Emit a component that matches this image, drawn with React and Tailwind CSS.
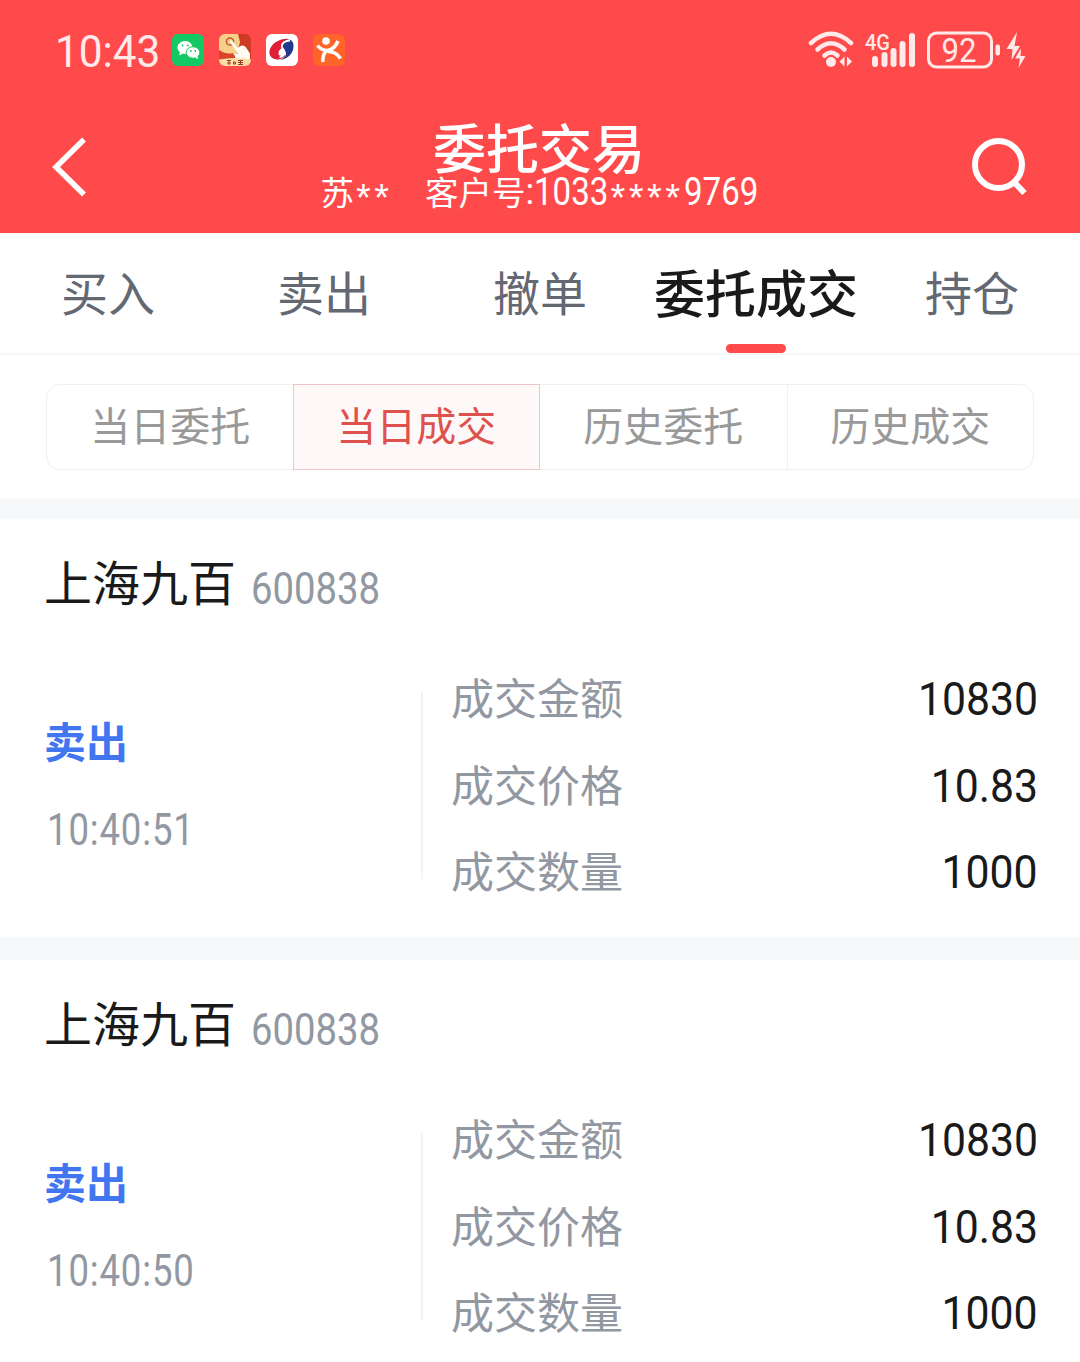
import clsx from 'clsx';

const TABS = ['买入', '卖出', '撤单', '委托成交', '持仓'];
const FILTERS = ['当日委托', '当日成交', '历史委托', '历史成交'];

const TRADES = [
  { name: '上海九百', code: '600838', side: '卖出', time: '10:40:51', amount: '10830', price: '10.83', qty: '1000' },
  { name: '上海九百', code: '600838', side: '卖出', time: '10:40:50', amount: '10830', price: '10.83', qty: '1000' },
];

const WeChatIcon = () => (
  <svg width="32" height="32" viewBox="0 0 32 32">
    <rect width="32" height="32" rx="6" fill="#14c964" />
    <ellipse cx="13" cy="13.5" rx="7.6" ry="6.5" fill="#fff" />
    <path d="M8 18l-.8 3.6 4-2z" fill="#fff" />
    <ellipse cx="21" cy="18.5" rx="6.8" ry="5.8" fill="#fff" stroke="#14c964" strokeWidth="1" />
    <path d="M23 23.5l3 1.8-.5-3.3z" fill="#fff" />
    <circle cx="10.5" cy="11.5" r="1" fill="#14c964" />
    <circle cx="15.8" cy="11.5" r="1" fill="#14c964" />
    <circle cx="18.8" cy="17" r=".9" fill="#14c964" />
    <circle cx="23.3" cy="17" r=".9" fill="#14c964" />
  </svg>
);

const BrokerIcon = () => (
  <svg width="32" height="32" viewBox="0 0 32 32">
    <defs>
      <clipPath id="broker-clip">
        <rect width="32" height="32" rx="6" />
      </clipPath>
    </defs>
    <g clipPath="url(#broker-clip)">
      <rect width="32" height="32" fill="#cf3a25" />
      <path d="M0 0h19l2 8-3 12-8 2-10-5z" fill="#f6cf8b" />
      <path d="M0 16q8 5 14 3l2 7H0z" fill="#d9442b" />
      <circle cx="11" cy="7.500" r="3.6" fill="none" stroke="#c8572e" strokeWidth="1.5" />
      <path d="M10.500 7.500q1.500-2 3.500 0l4.500 6.500 4-2.500q3-.5 4.500 2l4 6v6H17l-2-5.500 4-.5z" fill="#fffaf2" />
      <path d="M0 25.500q16-3 32 0V32H0z" fill="#fbdca4" />
      <path d="M8 26.500h4M8 29h4M10 26v5M14.500 28h2v2h-2zM19 26.500h5M19 28.500h5M19 30.500h5M21.500 26v4.500" stroke="#9a3a20" strokeWidth="1" fill="none" />
    </g>
  </svg>
);

const SwirlIcon = () => (
  <svg width="32" height="32" viewBox="0 0 32 32">
    <rect width="32" height="32" rx="6" fill="#fff" />
    <path d="M23 5C15 4 5 9 3.500 17c-1 5 3 9 9 8.500 3-.3 6-2 7-4.500-3 1.500-7 1.500-7-1.500 0-5 5-5 5.500-9 .3-2 2-4.500 5-5.500z" fill="#df1f35" />
    <path d="M19 6c6-2 9 2 8.500 7-.5 7-6 12-13.500 13 5-2 7.500-6 5-9-1.500-1.500-3.500-3-2.500-5.500.8-2.500 1.500-4 2.500-5.500z" fill="#233a8c" />
    <path d="M24 6.500c-5 0-9 3-8 6.500 1 3 3.500 3.500 2.500 6.500-1 2-3 3.500-5 4" fill="none" stroke="#fff" strokeWidth="1.800" />
  </svg>
);

const RunnerIcon = () => (
  <svg width="32" height="32" viewBox="0 0 32 32">
    <rect width="32" height="32" rx="6" fill="#ff6428" />
    <circle cx="13" cy="7" r="3.800" fill="#fff" />
    <path d="M4.500 11.500q4 5 10 5 7-1 10.500-9.500M14 16q-5 5-4 12M14.500 17.500q8-.5 13 7" fill="none" stroke="#fff" strokeWidth="3.600" />
  </svg>
);

const SignalIcons = () => (
  <svg width="222" height="44" viewBox="0 0 222 44" fill="none" stroke="#ffe9e9">
    <g strokeWidth="4.500" strokeLinecap="round">
      <path d="M3 15Q23 -3.500 43 15" />
      <path d="M9.500 21.500Q23 9 36.500 21.500" />
      <path d="M16.500 27.500Q23 21.500 29.500 27.500" />
    </g>
    <g fill="#ffe9e9" stroke="none">
      <circle cx="23" cy="34" r="5" />
      <path d="M36.500 28.500v10l-5-5zM39 28.500v10l5-5z" />
      <rect x="64" y="28" width="6" height="11" rx="3" />
      <rect x="73.500" y="24" width="6" height="15" rx="3" />
      <rect x="82.500" y="20" width="6" height="19" rx="3" />
      <rect x="91.500" y="13" width="6" height="26" rx="3" />
      <rect x="101" y="5" width="6" height="34" rx="3" />
      <rect x="187.500" y="16.500" width="4.500" height="11" rx="2" />
      <path d="M209 4l-10.500 17h6l-1 11 8.500-14h-5.500zM213 20.500l-6 10h5l-1.500 9.500 7-12h-5z" />
      <text x="57" y="22" fontSize="22" fontWeight="500" fontFamily="Roboto" textLength="25" lengthAdjust="spacingAndGlyphs">4G</text>
      <text x="133.500" y="34" fontSize="34" fontFamily="Roboto" textLength="35" lengthAdjust="spacingAndGlyphs">92</text>
    </g>
    <rect x="120.500" y="5" width="63" height="34" rx="8" strokeWidth="3" />
  </svg>
);

const StatusBar = () => (
  <div className="flex h-[100px] items-center justify-between pl-[55px] pr-[50px]">
    <div className="flex items-center gap-[15px]">
      <span className="mt-[4px] w-[102px] origin-left scale-x-[0.94] whitespace-nowrap font-[Roboto] text-[45px] leading-[48px] text-[#ffe9e9]">
        10:43
      </span>
      <WeChatIcon />
      <BrokerIcon />
      <SwirlIcon />
      <RunnerIcon />
    </div>
    <SignalIcons />
  </div>
);

const Stars = ({ children, className }) => (
  <span className={clsx("pl-[2px] pt-[15px] font-['Liberation_Sans'] text-[38px] tracking-[3.500px]", className)}>
    {children}
  </span>
);

const Digits = ({ children }) => (
  <span className="w-[75px] origin-left scale-x-[0.87] whitespace-nowrap pt-[3px] font-[Roboto] text-[38px]">{children}</span>
);

const Header = () => (
  <header className="h-[233px] bg-[#ff4a4b] text-white">
    <StatusBar />
    <div className="grid h-[133px] grid-cols-[60px_1fr_60px] px-[50px]">
      <svg className="mt-[34px]" width="40" height="66" viewBox="0 0 40 66" fill="none" stroke="#fff" strokeWidth="5.500">
        <path d="M34 5.500L6 33l28 27.500" />
      </svg>
      <div className="flex flex-col items-center pt-[18px]">
        <h1 className="-ml-[2px] text-[53px] font-medium leading-[56px]">委托交易</h1>
        <div className="-ml-px -mt-[10px] flex items-center text-[33.500px] leading-[38px]">
          <span>苏</span>
          <Stars className="w-[71px]">**</Stars>
          <span>客户号</span>
          <span className="w-[8px] pt-[3px] font-[Roboto] text-[36px]">:</span>
          <Digits>1033</Digits>
          <Stars className="w-[75px]">****</Stars>
          <Digits>9769</Digits>
        </div>
      </div>
      <svg className="mt-[34px]" width="60" height="66" viewBox="0 0 60 66" fill="none" stroke="#fff" strokeWidth="6">
        <circle cx="28.500" cy="30.500" r="23.500" />
        <path d="M44 48l10.500 11" />
      </svg>
    </div>
  </header>
);

const Tabs = ({ active }) => (
  <nav className="grid h-[122px] grid-cols-5 border-b-2 border-[#f7f7f9]">
    {TABS.map((tab) => (
      <div key={tab} className="relative flex justify-center pt-[26px]">
        <span
          className={clsx(
            'whitespace-nowrap leading-[64px]',
            tab === active ? 'text-[51px] font-medium text-[#1a1a1a]' : 'text-[47px] text-[#646873]'
          )}
        >
          {tab}
        </span>
        {tab === active && <i className="absolute bottom-0 h-[9px] w-[60px] rounded-full bg-[#ff4a4b]" />}
      </div>
    ))}
  </nav>
);

const Filters = ({ active }) => (
  <div className="h-[144px] px-[46px] pt-[29px]">
    <div className="grid h-[86px] grid-cols-4 rounded-[14px] border border-[#edf1f1]">
      {FILTERS.map((filter, i) => (
        <div
          key={filter}
          className={clsx(
            'flex justify-center text-[40px]',
            filter === active
              ? '-my-px -ml-px border-[1.5px] border-[#eec5c9] bg-[#fff8f8] leading-[79px] text-[#dd524d]'
              : 'leading-[79px] text-[#999]',
            i === 3 && 'border-l border-[#edf1f1]'
          )}
        >
          {filter}
        </div>
      ))}
    </div>
  </div>
);

const Row = ({ label, value }) => (
  <div className="flex h-[86.5px] items-center justify-between">
    <span className="-mt-[6px] text-[43px] leading-[60px] text-[#9298a2]">{label}</span>
    <span className="origin-right scale-x-[0.91] font-[Roboto] text-[47px] leading-[60px] text-[#1a1a1a]">{value}</span>
  </div>
);

const TradeCard = ({ trade }) => (
  <section className="h-[418px] pl-[45px] pr-[42px]">
    <div className="flex items-start gap-[15px] pt-[27px]">
      <h2 className="-ml-px text-[48px] leading-[68px] text-[#1a1a1a]">{trade.name}</h2>
      <span className="mt-[14px] origin-left scale-x-[0.88] font-[Roboto] text-[43.5px] leading-[60px] text-[#9298a2]">
        {trade.code}
      </span>
    </div>
    <div className="flex pt-[34px]">
      <div className="w-[376px] pt-[56px]">
        <p className="-ml-px text-[42px] font-bold leading-[60px] text-[#4275f0]">{trade.side}</p>
        <p className="ml-[2px] mt-[33px] w-fit origin-left scale-x-[0.84] font-[Roboto] text-[43.5px] leading-[56px] tracking-[1px] text-[#9298a2]">
          {trade.time}
        </p>
      </div>
      <div className="mt-[38px] h-[187px] w-[2px] bg-[#f2f3f7]" />
      <div className="flex-1 pl-[28px] pt-[2px]">
        <Row label="成交金额" value={trade.amount} />
        <Row label="成交价格" value={trade.price} />
        <Row label="成交数量" value={trade.qty} />
      </div>
    </div>
  </section>
);

export default function App() {
  return (
    <div className="h-[1362px] w-[1080px] overflow-hidden bg-white font-['Noto_Sans_CJK_SC',sans-serif]">
      <Header />
      <Tabs active="委托成交" />
      <Filters active="当日成交" />
      <div className="h-[20px] bg-[#f7f8fa]" />
      <TradeCard trade={TRADES[0]} />
      <div className="h-[23px] bg-[#f7f8fa]" />
      <TradeCard trade={TRADES[1]} />
    </div>
  );
}
